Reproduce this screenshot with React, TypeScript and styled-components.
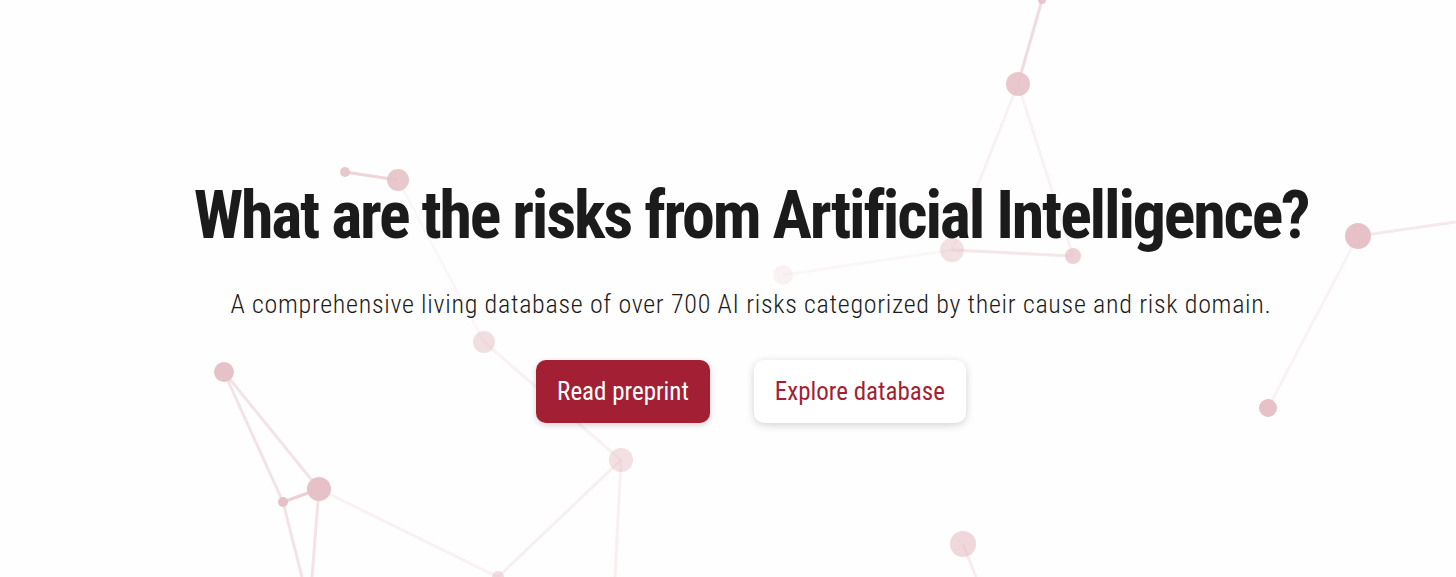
import React from "react";
import styled, { createGlobalStyle } from "styled-components";

const GlobalStyle = createGlobalStyle`
  html, body {
    margin: 0;
    padding: 0;
    background: #ffffff;
  }
  body {
    font-family: "Roboto Condensed", Roboto, "Liberation Sans", sans-serif;
    font-stretch: condensed;
  }
`;

const Hero = styled.section`
  position: relative;
  height: 577px;
  overflow: hidden;
  background: #fefefe;
`;

const Network = styled.svg`
  position: absolute;
  inset: 0;
  width: 100%;
  height: 100%;
  z-index: 0;
`;

const Content = styled.div`
  position: relative;
  z-index: 1;
  display: flex;
  flex-direction: column;
  align-items: center;
  padding: 183px 0 0 46px;
`;

const Title = styled.h1`
  margin: 0;
  font-size: 66px;
  line-height: 1;
  font-weight: 700;
  color: #1b1b1b;
  letter-spacing: -2.2px;
`;

const Subtitle = styled.p`
  margin: 42px 0 0;
  font-size: 26px;
  line-height: 1;
  font-weight: 300;
  color: #1b1b1b;
  letter-spacing: 0.7px;
`;

const Actions = styled.div`
  display: flex;
  gap: 44px;
  margin-top: 43px;
`;

const Button = styled.a<{ $primary?: boolean }>`
  display: flex;
  align-items: center;
  justify-content: center;
  height: 63px;
  padding: 0 21px;
  box-sizing: border-box;
  border-radius: 10px;
  font-size: 25px;
  font-weight: 400;
  text-decoration: none;
  cursor: pointer;
  background: ${(p) => (p.$primary ? "#a31f34" : "#ffffff")};
  color: ${(p) => (p.$primary ? "#ffffff" : "#a31f34")};
  box-shadow: ${(p) =>
    p.$primary
      ? "0 2px 6px rgba(0, 0, 0, 0.18)"
      : "0 2px 8px rgba(0, 0, 0, 0.18)"};
`;

type Node = { x: number; y: number; r: number; o: number };

const nodes: Node[] = [
  { x: 1042, y: 0, r: 4, o: 0.9 },
  { x: 1018, y: 84, r: 12, o: 0.9 },
  { x: 345, y: 172, r: 5, o: 0.9 },
  { x: 398, y: 180, r: 11, o: 0.9 },
  { x: 952, y: 250, r: 12, o: 0.5 },
  { x: 1073, y: 256, r: 8, o: 0.75 },
  { x: 783, y: 275, r: 10, o: 0.2 },
  { x: 1358, y: 236, r: 13, o: 1 },
  { x: 484, y: 342, r: 11, o: 0.55 },
  { x: 224, y: 372, r: 10, o: 1 },
  { x: 1268, y: 408, r: 9, o: 1 },
  { x: 621, y: 460, r: 12, o: 0.5 },
  { x: 319, y: 489, r: 12, o: 1 },
  { x: 283, y: 502, r: 5, o: 1 },
  { x: 963, y: 544, r: 13, o: 0.65 },
  { x: 498, y: 577, r: 6, o: 0.55 },
];

const links: [number, number, number, number, number][] = [
  [1042, 0, 1018, 84, 0.6],
  [1018, 84, 952, 250, 0.2],
  [1018, 84, 1073, 256, 0.2],
  [952, 250, 1073, 256, 0.4],
  [783, 275, 952, 250, 0.12],
  [345, 172, 398, 180, 0.7],
  [398, 180, 484, 342, 0.12],
  [484, 342, 621, 460, 0.2],
  [621, 460, 498, 577, 0.25],
  [621, 460, 615, 577, 0.25],
  [1358, 236, 1456, 222, 0.35],
  [1358, 236, 1268, 408, 0.18],
  [224, 372, 319, 489, 0.45],
  [224, 372, 283, 502, 0.45],
  [283, 502, 319, 489, 0.8],
  [283, 502, 302, 577, 0.45],
  [319, 489, 312, 577, 0.45],
  [319, 489, 498, 577, 0.2],
  [963, 544, 976, 577, 0.3],
];

const Background = () => (
  <Network viewBox="0 0 1456 577" preserveAspectRatio="none" aria-hidden>
    {links.map(([x1, y1, x2, y2, o], i) => (
      <line
        key={`l${i}`}
        x1={x1}
        y1={y1}
        x2={x2}
        y2={y2}
        stroke="#e8c3c9"
        strokeOpacity={o}
        strokeWidth={3}
      />
    ))}
    {nodes.map((n, i) => (
      <circle key={`n${i}`} cx={n.x} cy={n.y} r={n.r} fill="#e6c2c8" fillOpacity={n.o} />
    ))}
  </Network>
);

export default function App() {
  return (
    <>
      <GlobalStyle />
      <Hero>
        <Background />
        <Content>
          <Title>What are the risks from Artificial Intelligence?</Title>
          <Subtitle>
            A comprehensive living database of over 700 AI risks categorized by their cause and risk domain.
          </Subtitle>
          <Actions>
            <Button $primary>Read preprint</Button>
            <Button>Explore database</Button>
          </Actions>
        </Content>
      </Hero>
    </>
  );
}
